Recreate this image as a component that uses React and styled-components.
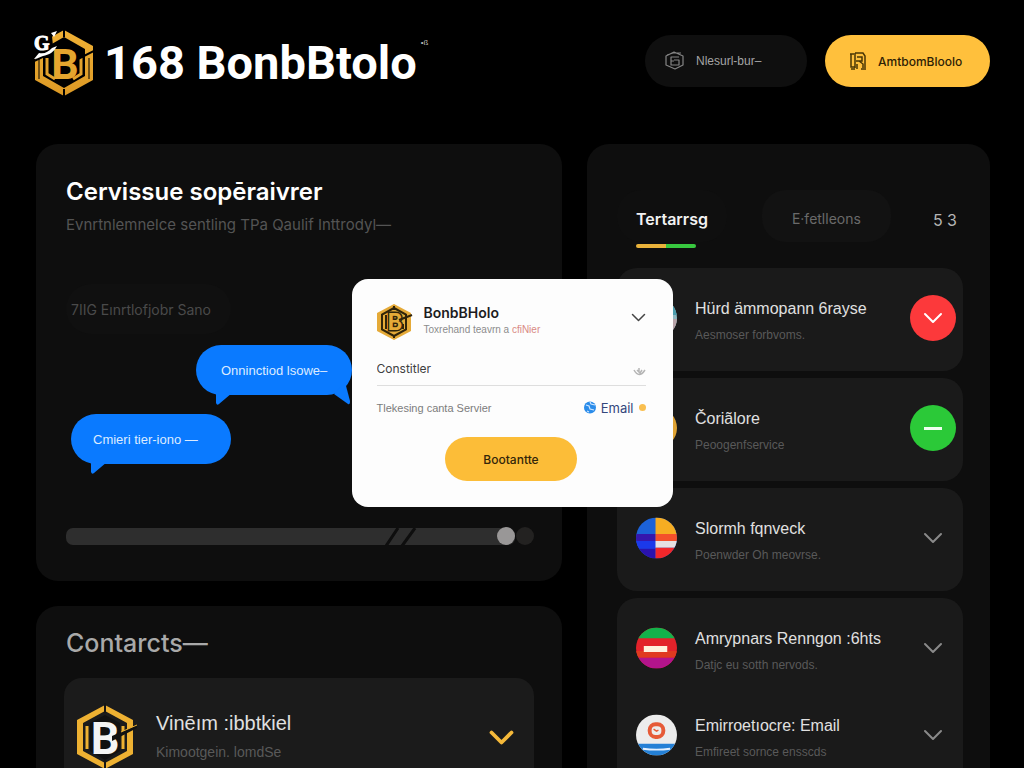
import React from 'react'
import styled, { createGlobalStyle } from 'styled-components'

const GlobalStyle = createGlobalStyle`
*{
  box-sizing:border-box;
}
body{
  margin:0;
  background:#000;
  color:#fff;
  font-family:"Liberation Sans", Arial, sans-serif;
}
button, select, input{
  font-family:inherit;
}
h1, h2, h3, p{
  margin:0;
}
`

const Page = styled.div`
  height:100vh;
  overflow:hidden;
  padding:0 34px 0 36px;
`

const StyledHeader = styled.header`
  display:flex;
  align-items:center;
  height:122px;
  margin-bottom:22px;
`

const Brand = styled.a`
  display:flex;
  align-items:center;
  gap:10px;
  margin:4px auto 0 -2px;
  color:#fff;
  text-decoration:none;

  h1{
    font-family:Roboto, sans-serif;
    font-size:47px;
    line-height:60px;
    font-weight:700;
  }
  sup{
    align-self:flex-start;
    margin:8px 0 0 -6px;
    font-size:8px;
    line-height:12px;
    color:#bbb;
  }
`

const HeaderNav = styled.nav`
  display:flex;
  gap:18px;
`

const PillButton = styled.button`
  display:flex;
  align-items:center;
  gap:11px;
  min-width:${({ $primary }) => ($primary ? '165px' : '162px')};
  height:52px;
  padding:0 ${({ $primary }) => ($primary ? '24px' : '20px')};
  border:0;
  border-radius:26px;
  background:${({ $primary }) => ($primary ? '#ffc03c' : '#0f0f0f')};
  color:${({ $primary }) => ($primary ? '#2d2105' : '#a5a5a5')};
  font-family:${({ $primary }) => ($primary ? 'Inter, sans-serif' : 'inherit')};
  font-size:12px;
  font-weight:${({ $primary }) => ($primary ? 500 : 400)};
  cursor:pointer;
`

const Columns = styled.main`
  display:grid;
  grid-template-columns:minmax(0, 526fr) minmax(0, 403fr);
  gap:25px;
`

const Column = styled.div`
  display:flex;
  flex-direction:column;
  gap:25px;
`

const Card = styled.section`
  padding:${({ $pad }) => $pad || '31px 28px 36px 30px'};
  border-radius:22px;
  background:#0e0e0e;
`

const CardTitle = styled.h2`
  font-family:Inter, sans-serif;
  font-size:${({ $muted }) => ($muted ? '25px' : '24px')};
  line-height:34px;
  font-weight:${({ $muted }) => ($muted ? 500 : 600)};
  color:${({ $muted }) => ($muted ? '#a9a9a9' : '#fff')};
`

const CardText = styled.p`
  margin-top:5px;
  font-family:Inter, sans-serif;
  font-size:15px;
  line-height:22px;
  color:#545454;
`

const Tag = styled.span`
  display:inline-flex;
  align-items:center;
  height:50px;
  margin-top:48px;
  padding:0 20px 0 5px;
  border-radius:25px;
  background:#101010;
  color:#4a4a4a;
  font-family:Inter, sans-serif;
  font-size:14px;
`

const Thread = styled.div`
  display:flex;
  flex-direction:column;
  align-items:flex-start;
  gap:19px;
  margin-top:11px;
  padding:0 5px;
`

const Bubble = styled.div`
  position:relative;
  display:flex;
  align-items:center;
  min-width:${({ $indent }) => ($indent ? '156px' : '160px')};
  height:50px;
  margin-left:${({ $indent }) => ($indent ? '125px' : '0')};
  padding:0 ${({ $indent }) => ($indent ? '25px' : '22px')};
  border-radius:25px;
  background:#0a7aff;
  color:#dcebff;
  font-size:13px;
  white-space:nowrap;
`

const Tail = styled.svg`
  position:absolute;
  top:46px;
  left:${({ $right }) => ($right ? 'auto' : '20px')};
  right:${({ $right }) => ($right ? '2px' : 'auto')};
  width:16px;
  height:15px;
  overflow:visible;
  fill:#0a7aff;
`

const SliderRow = styled.div`
  display:flex;
  align-items:center;
  gap:1px;
  margin-top:63px;
`

const SliderWrap = styled.div`
  position:relative;
  display:flex;
  flex:1;

  svg{
    position:absolute;
    left:71%;
    top:0;
    width:32px;
    height:18px;
  }
`

const Slider = styled.input`
  appearance:none;
  width:100%;
  height:17px;
  margin:0;
  border-radius:7px;
  background:#2e2e2e;

  &::-webkit-slider-thumb{
    appearance:none;
    width:18px;
    height:18px;
    border-radius:50%;
    background:#999797;
  }
`

const SliderEnd = styled.span`
  width:18px;
  height:18px;
  border-radius:50%;
  background:#232221;
`

const ContactCard = styled.article`
  display:flex;
  align-items:center;
  gap:18px;
  height:118px;
  margin:18px 0 0 -2px;
  padding:0 16px 0 11px;
  border-radius:18px;
  background:#1b1b1b;
`

const RowText = styled.div`
  flex:1;
  min-width:0;
  padding-top:${({ $large }) => ($large ? '0' : '6px')};
  padding-bottom:${({ $large }) => ($large ? '2px' : '0')};
  white-space:nowrap;

  h3{
    font-size:${({ $large }) => ($large ? '20px' : '16px')};
    line-height:24px;
    font-weight:400;
    color:#e0e0e0;
  }
  p{
    margin-top:${({ $large }) => ($large ? '7px' : '4px')};
    font-size:${({ $large }) => ($large ? '14px' : '12px')};
    line-height:20px;
    color:#595959;
  }
`

const ActionButton = styled.button`
  display:grid;
  place-items:center;
  flex:none;
  width:${({ $size }) => $size || '46px'};
  height:${({ $size }) => $size || '46px'};
  padding:0;
  border:0;
  border-radius:50%;
  background:${({ $bg }) => $bg || 'transparent'};
  cursor:pointer;
`

const Tabs = styled.div`
  display:flex;
  align-items:center;
  height:52px;
  padding-right:6px;
`

const Tab = styled.button`
  position:relative;
  min-width:${({ $active }) => ($active ? '108px' : '129px')};
  height:52px;
  padding:5px 19px 0;
  margin-right:${({ $active }) => ($active ? 'auto' : '42px')};
  border:0;
  border-radius:24px;
  background:${({ $active }) => ($active ? '#0f0f0f' : '#121212')};
  color:${({ $active }) => ($active ? '#f2f2f2' : '#6a6a6a')};
  font-family:Inter, sans-serif;
  font-size:${({ $active }) => ($active ? '16px' : '14px')};
  line-height:20px;
  font-weight:${({ $active }) => ($active ? 600 : 400)};
  cursor:pointer;

  &::after{
    content:"";
    display:${({ $active }) => ($active ? 'block' : 'none')};
    position:absolute;
    left:19px;
    bottom:-6px;
    width:60px;
    height:4px;
    border-radius:2px;
    background:linear-gradient(90deg, #e9b23a 50%, #38c83f 50%);
  }
`

const Count = styled.span`
  padding-top:7px;
  color:#b5b5b5;
  font-family:Inter, sans-serif;
  font-size:16px;
`

const List = styled.ul`
  display:flex;
  flex-direction:column;
  gap:7px;
  margin:26px 0 0;
  padding:0;
  list-style:none;
`

const Group = styled.li`
  padding:${({ $stacked }) => ($stacked ? '0 0 30px' : '0')};
  border-radius:20px;
  background:#1a1a1a;
`

const Row = styled.div`
  display:flex;
  align-items:center;
  gap:18px;
  height:${({ $short }) => ($short ? '70px' : '103px')};
  padding:0 7px 3px 19px;
`

const Avatar = styled.svg`
  flex:none;
  width:41px;
  height:42px;
`

const Overlay = styled.div`
  position:fixed;
  inset:0;
  display:grid;
  place-items:center;
  padding-top:17px;
`

const Dialog = styled.form`
  width:321px;
  padding:24px 27px 26px 25px;
  border-radius:16px;
  background:#fdfdfd;
  color:#1d1d1f;
`

const DialogHead = styled.div`
  display:flex;
  align-items:flex-start;
  gap:11px;
  margin-right:-8px;
`

const DialogTitle = styled.div`
  flex:1;
  padding-top:1px;
  white-space:nowrap;

  h2{
    font-family:Inter, sans-serif;
    font-size:14px;
    line-height:18px;
    font-weight:600;
  }
  p{
    font-size:10px;
    line-height:16px;
    color:#8c8c8c;
  }
  em{
    font-style:normal;
    color:#d98a84;
  }
`

const SelectField = styled.label`
  position:relative;
  display:block;
  margin-top:12px;
  border-bottom:1px solid #dedede;

  svg{
    position:absolute;
    right:0;
    top:15px;
    pointer-events:none;
  }
`

const Select = styled.select`
  appearance:none;
  width:100%;
  height:32px;
  padding:0;
  border:0;
  background:transparent;
  color:#404040;
  font-family:Inter, sans-serif;
  font-size:12px;
`

const DialogLine = styled.div`
  display:flex;
  align-items:center;
  justify-content:space-between;
  height:44px;
  font-size:11px;
  color:#7c7c7c;
`

const EmailLink = styled.a`
  display:flex;
  align-items:center;
  gap:5px;
  color:#34477c;
  font-family:Inter, sans-serif;
  font-size:13px;
  text-decoration:none;
`

const Submit = styled.button`
  display:block;
  width:132px;
  height:44px;
  margin:7px auto 0;
  padding-top:3px;
  border:0;
  border-radius:22px;
  background:#fcbd38;
  color:#33260a;
  font-family:Inter, sans-serif;
  font-size:12px;
  font-weight:500;
  cursor:pointer;
`

const Chevron = ({ color = '#8a8a8a', width = 20, weight = 2 }) => (
  <svg width={width} height={width * 0.6} viewBox="0 0 20 12" fill="none" stroke={color}
    strokeWidth={weight} strokeLinecap="round" strokeLinejoin="round" aria-hidden="true">
    <path d="M2 2l8 8 8-8" />
  </svg>
)

const BrandMark = () => (
  <svg width="60" height="68" viewBox="0 0 60 68" aria-hidden="true">
    <defs>
      <linearGradient id="gold" x1="0" y1="0" x2="0" y2="1">
        <stop offset="0" stopColor="#f0b135" />
        <stop offset="1" stopColor="#dc9925" />
      </linearGradient>
    </defs>
    <path d="M30 1L59 17V51L30 67L1 51V17Z M30 8L9 20V47L30 59L51 47V20Z" fill="url(#gold)" fillRule="evenodd" />
    <path d="M13 29V45L21 50M47 29V45L39 50" fill="none" stroke="#e3a22c" strokeWidth="3" />
    <path d="M5 30v20M55 29v21" stroke="#000" strokeWidth="1" />
    <path d="M42 31L60 22M0 32L15 25M30 0v8M30 60v8" stroke="#000" strokeWidth="2" />
    <path d="M0 0H23L18 7L19 17L14 25L0 31Z" fill="#000" />
    <text x="31" y="50" textAnchor="middle" fontFamily="Roboto, sans-serif" fontWeight="700" fontSize="43" fill="#e5a52e">B</text>
    <text x="0" y="21" fontFamily="Liberation Serif, serif" fontWeight="700" fontSize="20" fill="#fff" stroke="#fff" strokeWidth="1">G</text>
    <path d="M0 30l5-6c6 1 9-1 13-5l5-2c-3 6-8 9-14 10-4 1-6 3-9 3z M17 4l6-2-3 6z" fill="#fff" />
  </svg>
)

const BadgeMark = () => (
  <svg width="36" height="38" viewBox="0 0 36 38" aria-hidden="true">
    <path d="M17 1L34 10V28L17 37L0 28V10Z" fill="#e5aa38" />
    <path d="M17 5L29 11.500V26.500L17 33L5 26.500V11.500Z" fill="none" stroke="#30240a" strokeWidth="2" />
    <path d="M9 12v14M26 21v5M17 3v4M17 32v3" stroke="#30240a" strokeWidth="2" />
    <text x="18" y="27" textAnchor="middle" fontFamily="Roboto, sans-serif" fontWeight="700" fontSize="23" fill="#e5aa38" stroke="#30240a" strokeWidth="3" paintOrder="stroke">B</text>
    <path d="M22 17l13-5" stroke="#30240a" strokeWidth="2" />
  </svg>
)

const ContactMark = () => (
  <svg width="63" height="68" viewBox="0 0 63 68" aria-hidden="true">
    <path d="M30 2L58 17V51L30 66L2 51V17Z M30 8L8 20V48L30 60L52 48V20Z" fill="#eeb132" fillRule="evenodd" />
    <path d="M12 23v23M48 23v23" stroke="#eeb132" strokeWidth="3" />
    <path d="M30 0v10M30 57v11" stroke="#151515" strokeWidth="2" />
    <path d="M30 12L45 20V48L30 57L15 48V20Z" fill="#111" />
    <text x="30" y="51" textAnchor="middle" fontFamily="Roboto, sans-serif" fontWeight="700" fontSize="45" fill="#f4f4f4">B</text>
    <path d="M37 38l25-13v-3l-25 11z" fill="#111" />
    <path d="M46 29l16-7" stroke="#eeb132" strokeWidth="1" />
  </svg>
)

const HexIcon = () => (
  <svg width="20" height="20" viewBox="0 0 20 20" fill="none" stroke="#858585" strokeWidth="1.200" strokeLinejoin="round" aria-hidden="true">
    <path d="M1 5l8-4 9 4v9l-8 4-9-4zM2 4l6-2h8" />
    <path d="M14 6H6v8h8V9H9M6 10h3" />
  </svg>
)

const DocIcon = () => (
  <svg width="18" height="20" viewBox="0 0 18 20" fill="none" stroke="#4a3605" strokeWidth="1.500" aria-hidden="true">
    <path d="M2 3v13h4M1 3h4M6 2v15M6 2h8l2 3v12M8 6h5v4H7M10 10l4 3v4M8 13v5M2 18h4M12 18h5" />
  </svg>
)

const flags = {
  globe: (
    <>
      <rect width="42" height="42" fill="#8fb9c2" />
      <path d="M20 22h22v20H20z" fill="#b7a3a8" />
      <path d="M36 0h6v18h-6z" fill="#4d9eae" />
    </>
  ),
  coin: <rect width="42" height="42" fill="#dfa334" />,
  quarters: (
    <>
      <rect width="42" height="42" fill="#1c62d8" />
      <path d="M20 0h22v17H20z" fill="#f6ad22" />
      <path d="M0 17h20v7H0z" fill="#3517ad" />
      <path d="M0 24h20v8H0z" fill="#1b39ea" />
      <path d="M0 32h20v10H0z" fill="#2a12ad" />
      <path d="M20 17h22v7H20z" fill="#f4502b" />
      <path d="M20 24h22v7H20z" fill="#e6e0e2" />
      <path d="M20 31h22v11H20z" fill="#f1272a" />
    </>
  ),
  stripes: (
    <>
      <rect width="42" height="42" fill="#e3222a" />
      <path d="M0 0h42v11H0z" fill="#13b24b" />
      <path d="M0 24h42v7H0z" fill="#e03a20" />
      <path d="M0 31h42v11H0z" fill="#b3148b" />
      <path d="M8 19h24v6H8z" fill="#fff0dd" />
    </>
  ),
  mail: (
    <>
      <rect width="42" height="42" fill="#ececec" />
      <rect x="14" y="10" width="14" height="13" rx="6" fill="none" stroke="#e65a37" strokeWidth="4" />
      <path d="M18 15l3 2 2-1" fill="none" stroke="#e65a37" strokeWidth="1.500" />
      <path d="M0 30h42v12H0z" fill="#2480d6" />
      <path d="M7 35q14 2 28 0" fill="none" stroke="#e3f0ff" strokeWidth="2" />
    </>
  ),
}

const Flag = ({ kind }) => (
  <Avatar viewBox="0 0 42 42" aria-hidden="true">
    <clipPath id={`clip-${kind}`}><circle cx="21" cy="21" r="21" /></clipPath>
    <g clipPath={`url(#clip-${kind})`}>{flags[kind]}</g>
  </Avatar>
)

const services = [
  [{ flag: 'globe', title: 'Hürd ämmopann 6rayse', text: 'Aesmoser forbvoms.', action: 'alert' }],
  [{ flag: 'coin', title: 'Čoriãlore', text: 'Peoogenfservice', action: 'minus' }],
  [{ flag: 'quarters', title: 'Slormh fqnveck', text: 'Poenwder Oh meovrse.' }],
  [
    { flag: 'stripes', title: 'Amrypnars Renngon :6hts', text: 'Datjc eu sotth nervods.' },
    { flag: 'mail', title: 'Emirroetıocre: Email', text: 'Emfireet sornce ensscds', short: true },
  ],
]

const RowAction = ({ action, title }) => {
  if (action === 'alert') {
    return <ActionButton type="button" $bg="#fc393b" aria-label={title}><Chevron color="#fff" /></ActionButton>
  }
  if (action === 'minus') {
    return (
      <ActionButton type="button" $bg="#2bc938" aria-label={title}>
        <svg width="18" height="3" aria-hidden="true"><rect width="18" height="3" fill="#effff0" /></svg>
      </ActionButton>
    )
  }
  return <ActionButton type="button" aria-label={title}><Chevron /></ActionButton>
}

export default function App() {
  return (
    <>
      <GlobalStyle />
      <Page>
        <StyledHeader>
          <Brand href="#">
            <BrandMark />
            <h1>168 BonbBtolo</h1>
            <sup>•ß</sup>
          </Brand>
          <HeaderNav>
            <PillButton type="button"><HexIcon />Nlesurl-bur–</PillButton>
            <PillButton type="button" $primary><DocIcon />AmtbomBloolo</PillButton>
          </HeaderNav>
        </StyledHeader>

        <Columns>
          <Column>
            <Card>
              <CardTitle>Cervissue sopēraivrer</CardTitle>
              <CardText>Evnrtnlemnelce sentling TPa Qaulif Inttrodyl—</CardText>
              <Tag>7IIG Eınrtlofjobr Sano</Tag>
              <Thread>
                <Bubble $indent>
                  Onninctiod lsowe–
                  <Tail viewBox="0 0 16 15"><path d="M0 0v12q1 3 3 1L16 2z" /></Tail>
                  <Tail $right viewBox="0 0 16 15"><path d="M11 -9L16 10q0 4-2 3L0 3z" /></Tail>
                </Bubble>
                <Bubble>
                  Cmieri tier-iono —
                  <Tail viewBox="0 0 16 15"><path d="M0 0v12q1 3 3 1L16 2z" /></Tail>
                </Bubble>
              </Thread>
              <SliderRow>
                <SliderWrap>
                  <Slider type="range" min="0" max="100" defaultValue="100" aria-label="Progress" />
                  <svg viewBox="0 0 32 18" stroke="#0e0e0e" strokeWidth="3" aria-hidden="true">
                    <path d="M1 18L13 0M17 18L30 0" />
                  </svg>
                </SliderWrap>
                <SliderEnd />
              </SliderRow>
            </Card>

            <Card $pad="20px 28px 30px 30px">
              <CardTitle $muted>Contarcts—</CardTitle>
              <ContactCard>
                <ContactMark />
                <RowText $large>
                  <h3>Vinēım :ibbtkiel</h3>
                  <p>Kimootgein. lomdSe</p>
                </RowText>
                <ActionButton type="button" $size="34px" aria-label="Open contact">
                  <Chevron color="#f5b93a" width={25} weight={3} />
                </ActionButton>
              </ContactCard>
            </Card>
          </Column>

          <Card $pad="46px 27px 30px 30px">
            <Tabs role="tablist">
              <Tab type="button" role="tab" aria-selected="true" $active>Tertarrsg</Tab>
              <Tab type="button" role="tab" aria-selected="false">E·fetlleons</Tab>
              <Count>5 3</Count>
            </Tabs>
            <List>
              {services.map((group) => (
                <Group key={group[0].title} $stacked={group.length > 1}>
                  {group.map((item) => (
                    <Row key={item.title} $short={item.short}>
                      <Flag kind={item.flag} />
                      <RowText>
                        <h3>{item.title}</h3>
                        <p>{item.text}</p>
                      </RowText>
                      <RowAction action={item.action} title={item.title} />
                    </Row>
                  ))}
                </Group>
              ))}
            </List>
          </Card>
        </Columns>
      </Page>

      <Overlay>
        <Dialog role="dialog" aria-label="BonbBHolo" onSubmit={(e) => e.preventDefault()}>
          <DialogHead>
            <BadgeMark />
            <DialogTitle>
              <h2>BonbBHolo</h2>
              <p>Toxrehand teavrn a <em>cfiNier</em></p>
            </DialogTitle>
            <ActionButton type="button" $size="30px" aria-label="Collapse">
              <Chevron color="#444" width={15} />
            </ActionButton>
          </DialogHead>
          <SelectField>
            <Select aria-label="Constitler" defaultValue="a">
              <option value="a">Constitler</option>
            </Select>
            <svg width="13" height="8" viewBox="0 0 13 8" fill="none" stroke="#b5b5b5" strokeWidth="1.500" aria-hidden="true">
              <path d="M1 2q5 9 11 0M4 2l3 3 2-3M6 0v4" />
            </svg>
          </SelectField>
          <DialogLine>
            <span>Tlekesing canta Servier</span>
            <EmailLink href="#">
              <svg width="12" height="13" viewBox="0 0 12 13" aria-hidden="true">
                <circle cx="6" cy="6.500" r="6" fill="#2a8cea" />
                <path d="M2 4l3 1 1 3 4 1M6 1l1 2 4 1M3 10l2 1" fill="none" stroke="#cfe6ff" strokeWidth="1.200" />
              </svg>
              Email
              <svg width="7" height="7" viewBox="0 0 7 7" aria-hidden="true"><circle cx="3.500" cy="3.500" r="3.500" fill="#f9bf50" /></svg>
            </EmailLink>
          </DialogLine>
          <Submit type="submit">Bootantte</Submit>
        </Dialog>
      </Overlay>
    </>
  )
}
